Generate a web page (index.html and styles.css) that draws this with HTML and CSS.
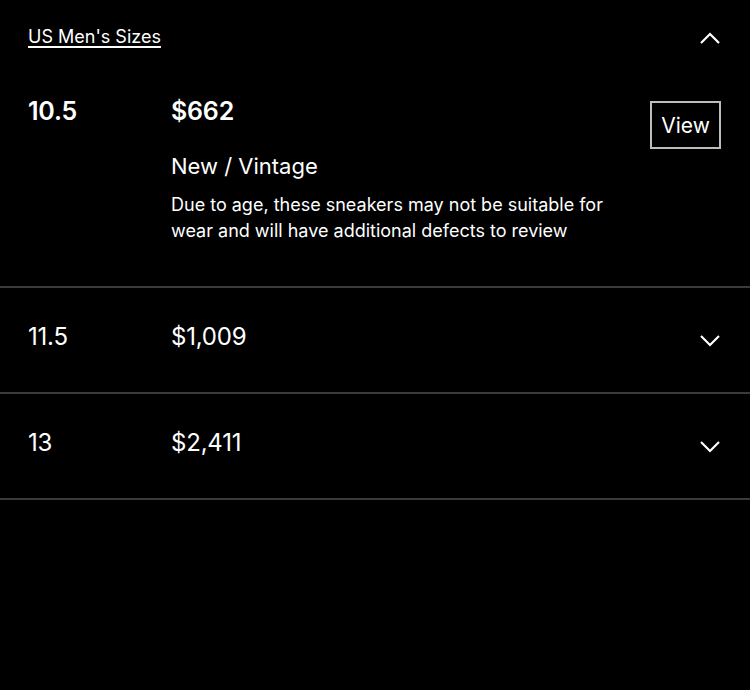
FILE: index.html
```html
<!DOCTYPE html>
<html lang="en">
<head>
<meta charset="utf-8">
<title>US Men's Sizes</title>
<link rel="stylesheet" href="styles.css">
</head>
<body>
<div class="sizes">
  <div class="sizes-header">
    <a class="sizes-title" href="#">US Men's Sizes</a>
    <svg class="chev" width="22" height="14" viewBox="0 0 22 14"><path d="M2 12 L11 3 L20 12" fill="none" stroke="#fff" stroke-width="2.2"/></svg>
  </div>

  <div class="row row-open">
    <div class="size">10.5</div>
    <div class="info">
      <div class="price">$662</div>
      <div class="cond">New / Vintage</div>
      <p class="desc">Due to age, these sneakers may not be suitable for wear and will have additional defects to review</p>
    </div>
    <button class="view">View</button>
  </div>

  <div class="row row-closed">
    <div class="size">11.5</div>
    <div class="price">$1,009</div>
    <svg class="chev" width="22" height="14" viewBox="0 0 22 14"><path d="M2 2 L11 11 L20 2" fill="none" stroke="#fff" stroke-width="2.2"/></svg>
  </div>

  <div class="row row-closed">
    <div class="size">13</div>
    <div class="price">$2,411</div>
    <svg class="chev" width="22" height="14" viewBox="0 0 22 14"><path d="M2 2 L11 11 L20 2" fill="none" stroke="#fff" stroke-width="2.2"/></svg>
  </div>
</div>
</body>
</html>
```
FILE: styles.css
```css
html, body {
  margin: 0;
  padding: 0;
  background: #000;
  color: #fff;
  font-family: Inter, "Noto Sans", "Liberation Sans", sans-serif;
}
body {
  width: 750px;
  height: 690px;
}
.sizes-header {
  display: flex;
  justify-content: space-between;
  align-items: center;
  padding: 21px 29px 0 28px;
  height: 31px;
}
.sizes-title {
  color: #fff;
  font-size: 18px;
  text-decoration: underline;
  text-underline-offset: 3px;
  text-decoration-thickness: 1.5px;
}
.sizes-header .chev {
  margin-top: 2px;
}
.chev {
  display: block;
}
.row {
  display: grid;
  grid-template-columns: 143px 1fr auto;
  padding: 0 29px 0 28px;
  border-bottom: 2px solid #3a3a3a;
}
.row-open {
  padding-top: 43px;
  padding-bottom: 42px;
  align-items: start;
}
.row-closed {
  height: 104px;
  align-items: center;
}
.size,
.price {
  font-size: 25px;
  line-height: 32px;
  letter-spacing: -0.2px;
}
.row-open .size,
.row-open .price {
  font-weight: 600;
}
.row-closed .size,
.row-closed .price {
  font-size: 24px;
  font-weight: 400;
  margin-top: -6px;
}
.row-closed .chev {
  margin-top: 2px;
}
.cond {
  font-size: 22px;
  line-height: 28px;
  margin-top: 25px;
}
.desc {
  margin: 12px 0 0;
  font-size: 18px;
  line-height: 26px;
  max-width: 460px;
}
.view {
  margin-top: 6px;
  background: #000;
  color: #fff;
  border: 2px solid #bdbdbd;
  font-family: inherit;
  font-size: 21px;
  width: 71px;
  height: 48px;
  padding: 0;
}
```
